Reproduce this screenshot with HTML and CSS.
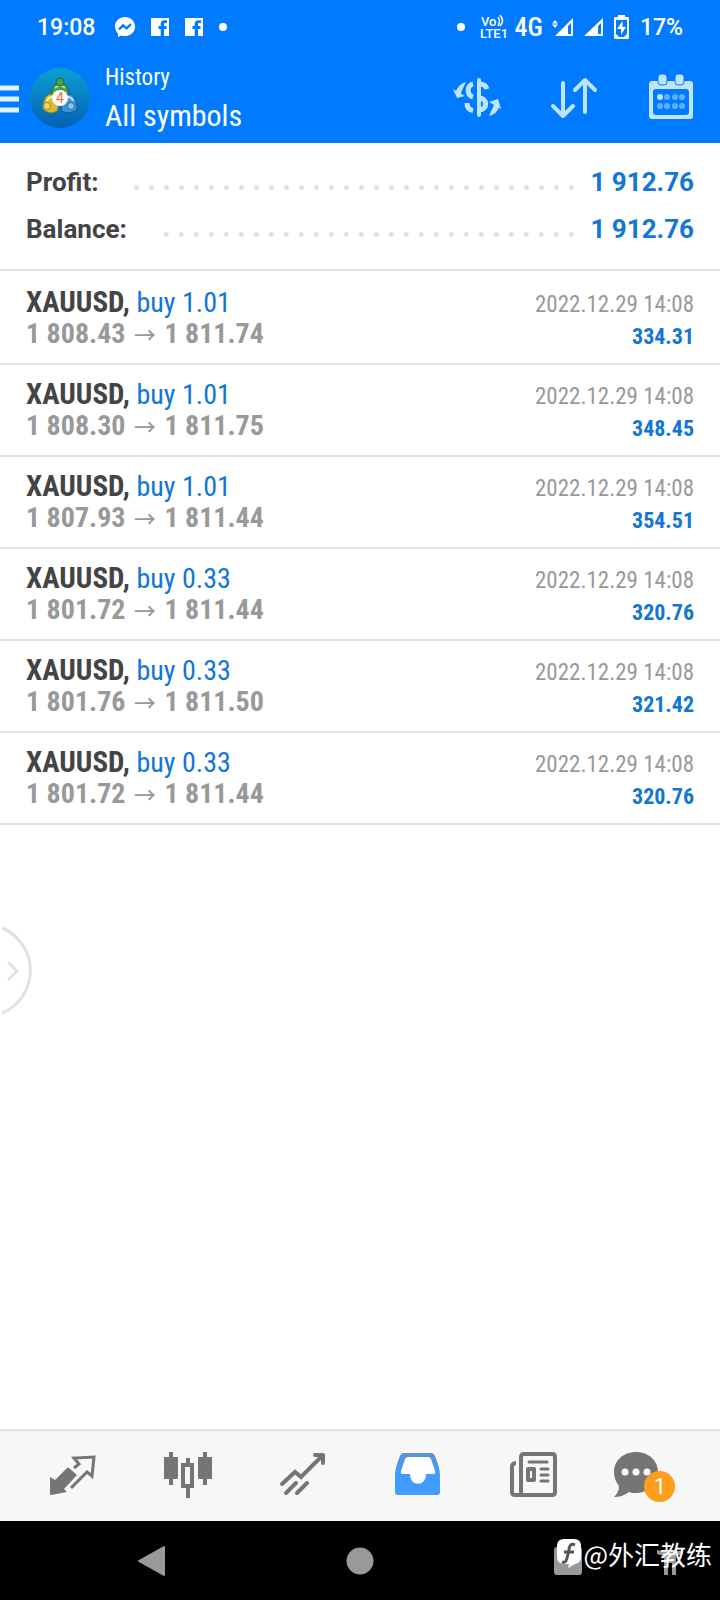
FILE: index.html
```html
<!DOCTYPE html>
<html lang="en">
  <head>
    <meta charset="UTF-8" />
    <meta name="viewport" content="width=device-width, initial-scale=1.0" />
    <title>History - All symbols</title>
    <link rel="stylesheet" href="styles.css" />
  </head>
  <body>
    <header class="header">
      <div class="status-bar">
        <div class="status-left">
          <span class="clock">19:08</span>
          <svg width="20" height="20" viewBox="0 0 20 20">
            <path fill="#fff" d="M10 0C4.400 0 0 4.100 0 9.500c0 2.800 1.200 5.200 3 6.900V20l3.200-1.500c1.200.4 2.500.6 3.800.6 5.600 0 10-4.200 10-9.600S15.600 0 10 0z" />
            <path fill="none" stroke="#007bff" stroke-width="2.400" d="M4 12.500l4-4.200 3.600 3L16 7" />
          </svg>
          <svg width="18" height="18" viewBox="0 0 18 18">
            <path fill="#fff" d="M0 0h18v18h-5v-7h2.500V8H13V6.200c0-.8.400-1.200 1.300-1.200H16V2.200h-2.800C11 2.200 9.700 3.600 9.700 6v2H7.500v3h2.200v7H0z" />
          </svg>
          <svg width="18" height="18" viewBox="0 0 18 18">
            <path fill="#fff" d="M0 0h18v18h-5v-7h2.500V8H13V6.200c0-.8.400-1.200 1.300-1.200H16V2.200h-2.800C11 2.200 9.700 3.600 9.700 6v2H7.500v3h2.200v7H0z" />
          </svg>
          <span class="dot"></span>
        </div>
        <div class="status-right">
          <span class="dot"></span>
          <svg class="volte" width="30" height="28" viewBox="0 0 30 28">
            <text x="1" y="13" font-size="13">Vo</text>
            <path fill="none" stroke="#fff" stroke-width="1.500" d="M18 4q3 4 0 9M20 2q5 6 0 11" />
            <text x="0" y="25" font-size="13">LTE1</text>
          </svg>
          <span class="network">4G</span>
          <svg width="22" height="18" viewBox="0 0 22 18">
            <path fill="#fff" d="M3 2l3 3.500H0zM3 10L0 6.500h6zM21 0v18H3zm-2 5l-3 3v8h3z" fill-rule="evenodd" />
          </svg>
          <svg width="20" height="18" viewBox="0 0 20 18">
            <path fill="#fff" d="M20 0v18H1zm-2 5l-3 3v8h3z" fill-rule="evenodd" />
          </svg>
          <svg class="battery" width="15" height="24" viewBox="0 0 15 24">
            <path fill="#fff" d="M4 0h7v2h3l1 1v20l-1 1H1l-1-1V3l1-1h3z" />
            <path fill="#007bff" d="M2 5h11v14l-3 3H5l-3-3z" />
            <path fill="#fff" d="M8.500 6L3 14h4v6l5-8H8.500z" />
          </svg>
          <span>17%</span>
        </div>
      </div>

      <div class="app-bar">
        <button type="button" class="menu-button" aria-label="Menu">
          <svg width="19" height="28" viewBox="0 0 19 28">
            <path stroke="#dff3ff" stroke-width="5" d="M0 3h19M0 14h19M0 25h19" />
          </svg>
        </button>
        <svg class="avatar" width="60" height="60" viewBox="0 0 60 60">
          <defs>
            <linearGradient id="sky" x1="0" y1="0" x2="0" y2="1">
              <stop offset="0" stop-color="#0aa0d2" />
              <stop offset="1" stop-color="#0560b4" />
            </linearGradient>
          </defs>
          <circle cx="30" cy="30" r="30" fill="url(#sky)" />
          <path d="M22 28c-2-7 2-13 8-13s10 6 8 13z" fill="#4f9d50" stroke="#20683c" />
          <path d="M25 20c3-3 7-3 10 0" fill="none" stroke="#b6dc8c" stroke-width="2" />
          <circle cx="30" cy="14" r="4" fill="#48a04a" stroke="#1d6b3b" />
          <path d="M13 41c0-9 3-15 9-15 5 5 8 11 5 17-5 3-10 2-14-2z" fill="#d9ba37" stroke="#8c8327" />
          <path d="M17 33c1-3 2-4 5-4" fill="none" stroke="#fff2a0" stroke-width="2" />
          <circle cx="17" cy="38" r="3.500" fill="#f1d85c" stroke="#a08a22" />
          <path d="M47 41c0-9-3-15-9-15-6 5-8 11-6 17 5 3 11 2 15-2z" fill="#3e94d8" stroke="#165c9b" />
          <path d="M43 33c-1-3-2-4-5-4" fill="none" stroke="#c4e6ff" stroke-width="2" />
          <circle cx="41" cy="38" r="3.500" fill="#83c6f2" stroke="#246ca8" />
          <circle cx="30" cy="30" r="8" fill="#fff" />
          <text x="30" y="35" class="avatar-number">4</text>
        </svg>
        <div class="titles">
          <span class="subtitle">History</span>
          <h1>All symbols</h1>
        </div>
        <div class="actions">
          <button type="button" aria-label="Symbols">
            <svg width="48" height="48" viewBox="0 0 48 48" fill="none" stroke="#bfe4ff" stroke-width="5">
              <path d="M26 6v35" stroke-width="4" stroke-linecap="round" />
              <path d="M20 10c-6 1-7 11 0 13M14 29c0 5 3 7 6 7.500M27 10c4 0 6 2 7 5M27 24c7 1 8 10 0 12" />
              <path d="M13 8q-3 6-6 13L3 17q3-7 10-9zM36 42q3-7 6-13l4 4q-2 7-10 9z" fill="#bfe4ff" stroke="none" />
              <path d="M0 15l4 9 8-2zM36 28l9-3 3 10z" fill="#bfe4ff" stroke="none" />
            </svg>
          </button>
          <button type="button" aria-label="Sort">
            <svg width="48" height="48" viewBox="0 0 48 48" fill="none" stroke="#bfe4ff" stroke-width="4" stroke-linecap="round" stroke-linejoin="round">
              <path d="M13 9v32M3 32l10 10 10-10M35 38V6M25 16L35 6l10 10" />
            </svg>
          </button>
          <button type="button" aria-label="Period">
            <svg width="48" height="48" viewBox="0 0 48 48" fill="#bfe4ff">
              <path fill-rule="evenodd" d="M5 7h38q3 0 3 3v32q0 3-3 3H5q-3 0-3-3V10q0-3 3-3zm4 8q-3 0-3 3v20q0 3 3 3h30q3 0 3-3V18q0-3-3-3z" />
              <rect x="11" y="0" width="9" height="11" rx="3" stroke="#007bff" />
              <rect x="28" y="0" width="9" height="11" rx="3" stroke="#007bff" />
              <circle cx="13" cy="23" r="3" />
              <g opacity="0.5">
                <circle cx="20" cy="23" r="3" />
                <circle cx="28" cy="23" r="3" />
                <circle cx="35" cy="23" r="3" />
                <circle cx="13" cy="32" r="3" />
                <circle cx="20" cy="32" r="3" />
                <circle cx="28" cy="32" r="3" />
                <circle cx="35" cy="32" r="3" />
              </g>
            </svg>
          </button>
        </div>
      </div>
    </header>

    <main class="content">
      <section class="summary">
        <div class="summary-row">
          <span>Profit:</span>
          <span class="leader"></span>
          <span class="amount">1 912.76</span>
        </div>
        <div class="summary-row">
          <span>Balance:</span>
          <span class="leader"></span>
          <span class="amount">1 912.76</span>
        </div>
      </section>

      <ul class="deals">
        <li class="deal">
          <div class="deal-info">
            <div class="symbol">XAUUSD, <span class="side">buy 1.01</span></div>
            <div class="prices">1 808.43 <span class="arrow">→</span> 1 811.74</div>
          </div>
          <div class="deal-result">
            <div class="date">2022.12.29 14:08</div>
            <div class="profit">334.31</div>
          </div>
        </li>
        <li class="deal">
          <div class="deal-info">
            <div class="symbol">XAUUSD, <span class="side">buy 1.01</span></div>
            <div class="prices">1 808.30 <span class="arrow">→</span> 1 811.75</div>
          </div>
          <div class="deal-result">
            <div class="date">2022.12.29 14:08</div>
            <div class="profit">348.45</div>
          </div>
        </li>
        <li class="deal">
          <div class="deal-info">
            <div class="symbol">XAUUSD, <span class="side">buy 1.01</span></div>
            <div class="prices">1 807.93 <span class="arrow">→</span> 1 811.44</div>
          </div>
          <div class="deal-result">
            <div class="date">2022.12.29 14:08</div>
            <div class="profit">354.51</div>
          </div>
        </li>
        <li class="deal">
          <div class="deal-info">
            <div class="symbol">XAUUSD, <span class="side">buy 0.33</span></div>
            <div class="prices">1 801.72 <span class="arrow">→</span> 1 811.44</div>
          </div>
          <div class="deal-result">
            <div class="date">2022.12.29 14:08</div>
            <div class="profit">320.76</div>
          </div>
        </li>
        <li class="deal">
          <div class="deal-info">
            <div class="symbol">XAUUSD, <span class="side">buy 0.33</span></div>
            <div class="prices">1 801.76 <span class="arrow">→</span> 1 811.50</div>
          </div>
          <div class="deal-result">
            <div class="date">2022.12.29 14:08</div>
            <div class="profit">321.42</div>
          </div>
        </li>
        <li class="deal">
          <div class="deal-info">
            <div class="symbol">XAUUSD, <span class="side">buy 0.33</span></div>
            <div class="prices">1 801.72 <span class="arrow">→</span> 1 811.44</div>
          </div>
          <div class="deal-result">
            <div class="date">2022.12.29 14:08</div>
            <div class="profit">320.76</div>
          </div>
        </li>
      </ul>

      <button type="button" class="drawer-handle" aria-label="Open panel">
        <svg width="34" height="96" viewBox="0 0 34 96" fill="none" stroke="#e2e2e2" stroke-width="3">
          <path d="M2 5a46 46 0 0 1 0 85" />
          <path d="M8 39l9 9-9 9" />
        </svg>
      </button>
    </main>

    <nav class="tabs">
      <a href="#quotes" aria-label="Quotes">
        <svg width="72" height="56" viewBox="0 0 72 56">
          <path fill="#757575" d="M14 29l5 3 12-12q1-1 2 0l8 7-13 14 3 3-16 3q-1 0-1-1z" />
          <path fill="none" stroke="#757575" stroke-width="3" d="M38 20l5-4-5-6 20-1-2 19-5-4-16 16" />
        </svg>
      </a>
      <a href="#chart" aria-label="Chart">
        <svg width="72" height="56" viewBox="0 0 72 56" fill="#757575">
          <rect x="13" y="9" width="14" height="22" rx="1" />
          <rect x="47" y="9" width="14" height="22" rx="1" />
          <path fill="none" stroke="#757575" stroke-width="4" d="M20 4v33M54 4v33M37 10v6M37 39v11M32 17h9v21h-9z" />
        </svg>
      </a>
      <a href="#trade" aria-label="Trade">
        <svg width="72" height="56" viewBox="0 0 72 56" fill="none" stroke="#757575" stroke-width="4" stroke-linecap="round">
          <path d="M16 36l13-12 6 5L56 8M20 45l10-10M31 45l10-10" />
          <path d="M49 7h8v8" stroke-linejoin="round" />
        </svg>
      </a>
      <a href="#history" aria-label="History">
        <svg width="72" height="56" viewBox="0 0 72 56">
          <defs>
            <linearGradient id="tray" x1="0" y1="0" x2="0" y2="1">
              <stop offset="0" stop-color="#5b92d0" />
              <stop offset="0.500" stop-color="#409cff" />
            </linearGradient>
          </defs>
          <path fill="url(#tray)" d="M22 5h27q3 0 4 3 5 12 5 19v17q0 3-3 3H16q-3 0-3-3V27q0-7 5-19 1-3 4-3z" />
          <path fill="#fff" d="M26 9h20q2 0 3 2l4 12q1 3-2 3h-7c0 13-16 13-16 0h-7q-3 0-2-3l4-12q1-2 3-2z" />
        </svg>
      </a>
      <a href="#news" aria-label="News">
        <svg width="72" height="56" viewBox="0 0 72 56" fill="none" stroke="#757575" stroke-width="4">
          <path d="M24 47h-6q-3 0-3-3V19q0-4 4-4M27 6h28q3 0 3 3v35q0 3-3 3H24V9q0-3 3-3z" />
          <path d="M32 14h18M44 21h7M44 27h7M44 33h7" stroke-width="3" stroke-linecap="round" />
          <path d="M31 21h6v11h-6z" stroke-linejoin="round" />
        </svg>
      </a>
      <a href="#messages" aria-label="Messages">
        <span class="messages">
          <svg width="72" height="56" viewBox="0 0 72 56">
            <path fill="#757575" d="M24 4c13 0 22 9 22 20s-9 21-22 21c-3 0-5 0-7-1-4 3-9 5-15 5 3-3 5-6 5-11-3-4-5-8-5-14C2 13 11 4 24 4z" />
            <circle cx="13" cy="24" r="3.500" fill="#fff" />
            <circle cx="24" cy="24" r="3.500" fill="#fff" />
            <circle cx="35" cy="24" r="3.500" fill="#fff" />
          </svg>
          <span class="badge">1</span>
        </span>
      </a>
    </nav>

    <footer class="system-nav">
      <button type="button" class="back" aria-label="Back">
        <svg width="28" height="32" viewBox="0 0 28 32">
          <path fill="#999" stroke="#999" stroke-width="2" stroke-linejoin="round" d="M26 2v28L1 16z" />
        </svg>
      </button>
      <button type="button" class="home" aria-label="Home">
        <svg width="28" height="28" viewBox="0 0 28 28"><circle cx="14" cy="14" r="13.500" fill="#999" /></svg>
      </button>
      <button type="button" class="recents" aria-label="Recent apps">
        <svg width="28" height="28" viewBox="0 0 28 28"><rect width="28" height="28" rx="3" fill="#999" /></svg>
      </button>
      <button type="button" class="accessibility" aria-label="Accessibility">
        <svg width="28" height="32" viewBox="0 0 28 32">
          <path fill="#999" d="M1 5q13 4 26 0v4l-7 2v19h-4V18h-4v12H8V11L1 9z" />
        </svg>
      </button>
      <div class="watermark">
        <svg width="26" height="30" viewBox="0 0 26 30">
          <path fill="#fff" d="M8 0h10q7 0 7 7v11q0 6-6 7l-7 4 1-4H8q-7 0-7-7V7q0-7 7-7z" />
          <path fill="none" stroke="#555" stroke-width="3" d="M19 6c-4-2-6 1-6 5l-2 8c-1 4-2 5-5 4M8 13h10" />
        </svg>
        <span>@外汇教练</span>
      </div>
    </footer>
  </body>
</html>
```
FILE: styles.css
```css
* {
  box-sizing: border-box;
}

body {
  font-family: "Roboto Condensed", "Liberation Sans Narrow", Roboto, sans-serif;
  margin: 0;
  min-height: 100vh;
  display: flex;
  flex-direction: column;
  background-color: #ffffff;
  color: #444444;
}

svg {
  display: block;
  flex-shrink: 0;
}

button {
  padding: 0;
  background: none;
  border: none;
  cursor: pointer;
}

.header {
  background-color: #007bff;
  color: #ffffff;
}

.status-bar {
  font-family: Roboto, sans-serif;
  font-size: 23px;
  font-weight: 500;
  height: 52px;
  padding: 2px 37px 0;
  display: flex;
  justify-content: space-between;
  align-items: center;
}

.status-left {
  display: flex;
  align-items: center;
  gap: 16px;
}

.clock {
  margin-right: 4px;
}

.status-right {
  display: flex;
  align-items: center;
  gap: 9px;
}

.dot {
  width: 8px;
  height: 8px;
  border-radius: 50%;
  background-color: #ffffff;
}

.volte {
  margin-left: 6px;
  margin-right: -4px;
  fill: #ffffff;
}

.network {
  font-family: "Roboto Condensed", Roboto, sans-serif;
  font-size: 26px;
}

.battery {
  margin: 0 2px;
}

.app-bar {
  height: 91px;
  padding-right: 25px;
  display: flex;
  align-items: center;
}

.menu-button {
  padding-top: 2px;
}

.avatar {
  margin-left: 11px;
}

.avatar-number {
  font-family: Roboto, sans-serif;
  font-size: 14px;
  fill: #e8743c;
  text-anchor: middle;
}

.titles {
  flex: 1;
  margin-left: 15px;
  padding-top: 4px;
}

.subtitle {
  display: block;
  font-size: 23px;
  line-height: 32px;
}

h1 {
  margin: 0;
  font-size: 30px;
  line-height: 44px;
  font-weight: 400;
}

.actions {
  display: flex;
  gap: 49px;
}

.content {
  flex: 1;
  position: relative;
}

.summary {
  padding: 16px 26px;
  border-bottom: 2px solid #e2e2e2;
  font-family: Roboto, sans-serif;
  font-size: 26px;
  font-weight: 700;
  line-height: 47px;
}

.summary-row {
  display: flex;
  align-items: center;
}

.leader {
  flex: 1;
  height: 5px;
  margin: 9px 12px 0 35px;
  background: radial-gradient(circle, #e0e0e0 2px, transparent 3px) right / 15px 5px repeat-x;
}

.amount {
  color: #1276d6;
}

.deals {
  list-style: none;
  margin: 0;
  padding: 2px 0 0;
}

.deal {
  display: flex;
  justify-content: space-between;
  padding: 13px 26px;
  border-bottom: 2px solid #e2e2e2;
  line-height: 32px;
}

.deal-info {
  font-size: 28px;
  font-weight: 700;
}

.symbol {
  font-size: 29px;
}

.side {
  font-size: 28px;
  font-weight: 400;
  line-height: 20px;
  color: #1276d6;
}

.prices {
  color: #999999;
}

.arrow {
  font-family: "Noto Sans CJK SC", sans-serif;
  font-size: 22px;
  font-weight: 500;
  line-height: 20px;
  margin: 0 2px;
}

.deal-result {
  padding-top: 3px;
  margin-bottom: -3px;
  text-align: right;
  font-size: 23px;
}

.date {
  color: #999999;
}

.profit {
  font-size: 22px;
  font-weight: 700;
  color: #1276d6;
}

.drawer-handle {
  position: absolute;
  left: 0;
  top: 780px;
}

.tabs {
  display: grid;
  grid-template-columns: repeat(6, 1fr);
  align-items: center;
  justify-items: center;
  height: 92px;
  padding: 0 14px;
  background-color: #f7f7f7;
  border-top: 2px solid #e2e2e2;
}

.messages {
  display: block;
  position: relative;
}

.badge {
  position: absolute;
  left: 32px;
  top: 23px;
  width: 31px;
  height: 31px;
  border-radius: 50%;
  background-color: #ff9d1c;
  color: #ffffff;
  font-family: Roboto, sans-serif;
  font-size: 22px;
  line-height: 31px;
  text-align: center;
}

.system-nav {
  position: relative;
  display: grid;
  grid-template-columns: 25fr repeat(5, 26fr) 25fr;
  align-items: center;
  justify-items: center;
  height: 79px;
  background-color: #000000;
}

.back {
  grid-column: 2;
}

.home {
  grid-column: 4;
}

.recents {
  grid-column: 6;
}

.accessibility {
  grid-column: 7;
}

.watermark {
  position: absolute;
  right: 8px;
  top: 15px;
  display: flex;
  align-items: center;
  gap: 1px;
  color: #ffffff;
  font-family: "Noto Sans CJK SC", sans-serif;
  font-size: 26px;
  line-height: 36px;
}
```
